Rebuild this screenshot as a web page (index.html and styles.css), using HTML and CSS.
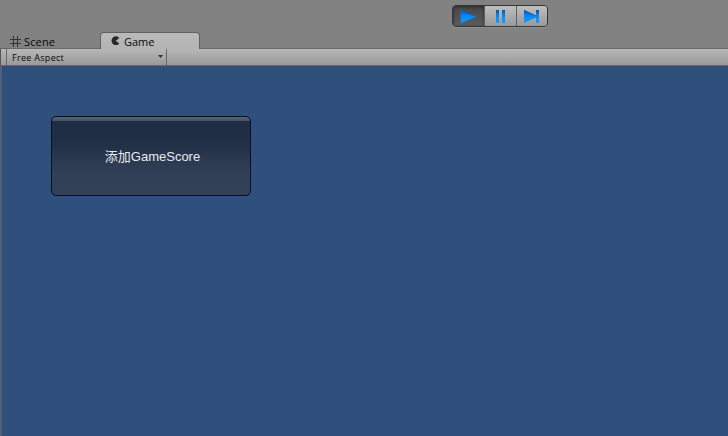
FILE: index.html
```html
<!DOCTYPE html>
<html lang="zh">
<head>
<meta charset="utf-8">
<title>Game</title>
<link rel="stylesheet" href="styles.css">
</head>
<body>
<header class="toolbar">
  <div class="transport">
    <button class="control active" aria-label="Play"><svg width="31" height="20" viewBox="0 0 31 20"><defs><linearGradient id="blue" x1="0" y1="0" x2="0" y2="1"><stop offset="0" stop-color="#064fc0"/><stop offset=".45" stop-color="#0788f4"/><stop offset="1" stop-color="#159cff"/></linearGradient></defs><path class="glow" d="M8 4L23 10.5L8 17Z"/><path fill="url(#blue)" d="M8 4L23 10.5L8 17Z"/><path class="edge" d="M8 4.4L22.5 10.5"/></svg></button>
    <button class="control" aria-label="Pause"><svg width="31" height="20" viewBox="0 0 31 20"><path fill="url(#blue)" d="M12 4h3v13h-3zM18 4h3v13h-3z"/></svg></button>
    <button class="control" aria-label="Step"><svg width="31" height="20" viewBox="0 0 31 20"><path fill="url(#blue)" d="M8 4L20 9.5V4h3v13h-3v-5.5L8 17Z"/><path class="edge" d="M8 4.4L20 10"/></svg></button>
  </div>
</header>
<nav class="tabs">
  <div class="tab scene"><svg width="12" height="12" viewBox="0 0 12 12"><path d="M3.5 0v11M7.5 0v11M0 3.5h11M0 7.5h11" fill="none" stroke="#333" stroke-width="1"/></svg><span>Scene</span></div>
  <div class="tab game"><svg width="10" height="10" viewBox="0 0 10 10"><path d="M8.3 1.9A4.4 4.4 0 1 0 8.3 7.5L4.8 4.7Z" fill="#292929"/></svg><span>Game</span></div>
</nav>
<div class="options"><div class="aspect"><span>Free Aspect</span><svg width="5" height="3" viewBox="0 0 5 3"><path d="M0 0h5L2.5 3Z" fill="#333"/></svg></div></div>
<main class="viewport"><button class="score">添加GameScore</button></main>
</body>
</html>
```
FILE: styles.css
```css
* { box-sizing: border-box; }
body {
  margin: 0;
  height: 436px;
  display: flex;
  flex-direction: column;
  overflow: hidden;
  background: #828282;
  color: #080808;
  font-family: "Open Sans", "Noto Sans", sans-serif;
}
svg { display: block; flex: none; }
button { margin: 0; padding: 0; border: 0; }
.toolbar { height: 32px; flex: none; padding: 5px 0 0 452px; }
.transport {
  width: 96px;
  height: 22px;
  display: flex;
  border: 1px solid #353535;
  border-radius: 4px;
  overflow: hidden;
  box-shadow: 0 1px 0 #929292;
}
.control {
  width: 32px;
  height: 20px;
  flex: none;
  border-left: 1px solid #606060;
  background: linear-gradient(#bebebe, #999);
}
.control svg { margin-left: -1px; }
.control.active {
  width: 31px;
  border-left: 0;
  background: linear-gradient(#464646, #5c5c5c);
  box-shadow: inset 0 1px 3px #292929;
}
.control.active svg { margin-left: 0; }
.edge { fill: none; stroke: #0546a5; stroke-width: .8; opacity: .7; }
.glow { fill: none; stroke: #1689e8; stroke-width: 2; opacity: .25; }
.tabs {
  height: 17px;
  flex: none;
  display: flex;
  box-shadow: inset 0 -1px #686868;
}
.tab { display: flex; font-size: 11px; line-height: 17px; }
.scene { width: 100px; padding: 1px 0 0 10px; letter-spacing: .15px; }
.scene svg { margin: 3px 2px 0 0; }
.game {
  width: 100px;
  padding: 0 0 0 10px;
  border: 1px solid #606060;
  border-bottom: 0;
  border-radius: 4px 4px 0 0;
  background: linear-gradient(#bababa, #b3b3b3);
}
.game svg { margin: 3px 3px 0 0; }
.options {
  height: 17px;
  flex: none;
  padding-left: 5px;
  border-left: 1px solid #555;
  border-bottom: 1px solid #686868;
  background: linear-gradient(#b7b7b7, #999);
}
.aspect {
  width: 161px;
  height: 16px;
  display: flex;
  align-items: center;
  justify-content: space-between;
  padding: 0 3px 0 5px;
  border-left: 1px solid #666;
  border-right: 1px solid #666;
  font-size: 9px;
  font-weight: 500;
  line-height: 16px;
  letter-spacing: .3px;
}
.aspect span { padding-top: 1px; }
.aspect svg { margin-top: -2px; }
.viewport {
  flex: 1;
  padding: 50px 0 0 49px;
  border-left: 2px solid #526078;
  background: #2f4f7c;
}
.score {
  display: block;
  width: 200px;
  height: 80px;
  padding: 1px 0 0 3px;
  border: 1px solid #07101d;
  border-radius: 5px;
  background: linear-gradient(#566376 0, #465367 4px, #202e45 4px, #202e45 23px, #314057 56px, #334157 100%);
  color: #e8ebef;
  font: 13px/18px "Liberation Sans", "Noto Sans CJK SC", sans-serif;
}
```
